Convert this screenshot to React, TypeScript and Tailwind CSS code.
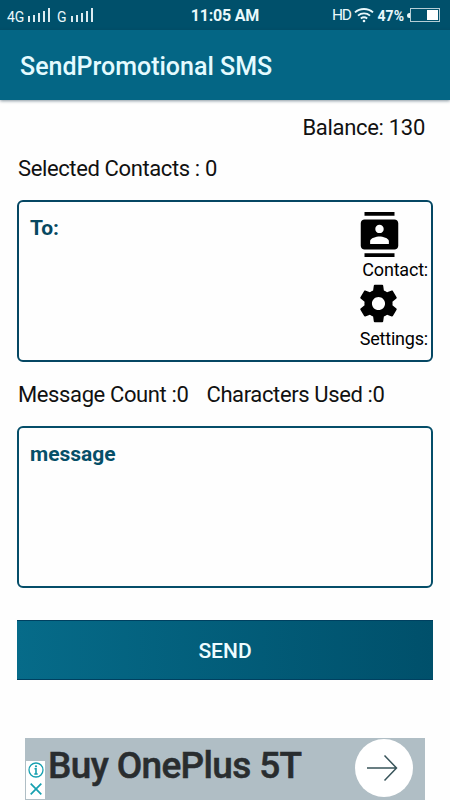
import { MdContacts } from 'react-icons/md';

const signalBars = [6, 7, 9, 11, 14];

const Signal = () => (
  <div className="flex h-[14px] items-end gap-[3px]">
    {signalBars.map((height) => (
      <span key={height} className="w-[2px] bg-[#dcebf0]" style={{ height }} />
    ))}
  </div>
);

const GearIcon = () => (
  <svg className="mt-[-1px] mr-[27px] mb-px h-[45px] w-[45px]" viewBox="0 0 24 24" fill="currentColor">
    <path d="M19.43 12.98c.04-.32.07-.64.07-.98s-.03-.66-.07-.98l2.11-1.65c.19-.15.24-.42.12-.64l-2-3.46c-.12-.22-.39-.3-.61-.22l-2.49 1c-.52-.4-1.08-.73-1.69-.98l-.38-2.65C14.46 2.18 14.25 2 14 2h-4c-.25 0-.46.18-.49.42l-.38 2.65c-.61.25-1.17.59-1.69.98l-2.49-1c-.23-.09-.49 0-.61.22l-2 3.46c-.13.22-.07.49.12.64l2.11 1.65c-.04.32-.07.65-.07.98s.03.66.07.98l-2.11 1.65c-.19.15-.24.42-.12.64l2 3.46c.12.22.39.3.61.22l2.49-1c.52.4 1.08.73 1.69.98l.38 2.65c.03.24.24.42.49.42h4c.25 0 .46-.18.49-.42l.38-2.65c.61-.25 1.17-.59 1.69-.98l2.49 1c.23.09.49 0 .61-.22l2-3.46c.12-.22.07-.49-.12-.64l-2.11-1.65zM12 15.5c-1.93 0-3.5-1.57-3.5-3.5s1.57-3.5 3.5-3.5 3.5 1.57 3.5 3.5-1.57 3.5-3.5 3.5z" />
  </svg>
);

const StatusBar = () => (
  <div className="grid h-[30px] grid-cols-3 items-center bg-[#00506b] text-[#eaf8fb]">
    <div className="flex items-center pl-[7px] text-[14px] leading-none">
      <span className="mt-[3px] w-[21px]">4G</span>
      <Signal />
      <span className="mt-[3px] ml-[7px] w-[14px]">G</span>
      <Signal />
    </div>
    <span className="pt-[2px] text-center text-[16px] leading-none font-bold tracking-[-0.2px]">11:05 AM</span>
    <div className="flex items-center justify-end pr-[10px] leading-none">
      <span className="mt-px text-[15.500px] tracking-[-1.3px]">HD</span>
      <svg className="ml-[3px] h-[16px] w-[20px]" viewBox="0 0 20 16" fill="none" stroke="currentColor" strokeWidth="1.9">
        <path d="M1 5.4C6 .8 14 .8 19 5.4M4 8.6c3.5-3 8.5-3 12 0M6.8 11.5c2-1.5 4.4-1.5 6.4 0" />
        <circle cx="10" cy="14" r="1.3" fill="currentColor" stroke="none" />
      </svg>
      <span className="mt-[2px] ml-[4px] text-[14px] font-bold">47%</span>
      <span className="ml-[3px] h-[5px] w-[3px] rounded-l-full bg-[#eaf8fb]" />
      <div className="flex h-[14px] w-[30px] justify-end border border-[#b5cdd5] p-px">
        <span className="w-[11px] bg-white" />
      </div>
    </div>
  </div>
);

const AdBanner = () => (
  <div className="mx-[25px] mt-[58px] flex h-[62px] bg-[#b0bec5]">
    <div className="mt-[23px] ml-px flex h-[38px] w-[19px] flex-col items-center bg-white pt-px text-[#16a0b0]">
      <svg className="h-[16px] w-[16px] shrink-0" viewBox="0 0 16 16" fill="none" stroke="currentColor" strokeWidth="1.3">
        <circle cx="8" cy="8" r="7" />
        <path d="M6.5 6.8H8v5M6.3 12h3.4" strokeWidth="1.6" />
        <circle cx="8" cy="4.3" r="1.1" fill="currentColor" stroke="none" />
      </svg>
      <svg className="mt-[5px] h-[12px] w-[12px] shrink-0" viewBox="0 0 12 12" fill="none" stroke="currentColor" strokeWidth="1.7">
        <path d="M.7 .7l10.600 10.600M11.300 .7L.7 11.300" />
      </svg>
    </div>
    <p className="mt-[7px] ml-[3px] w-[307px] text-[37px] leading-[42px] font-medium tracking-[-0.65px] whitespace-nowrap text-[#292d2f] [-webkit-text-stroke:0.5px_#292d2f]">
      Buy OnePlus 5T
    </p>
    <div className="mt-px flex h-[58px] w-[58px] shrink-0 items-center justify-center rounded-full bg-white">
      <svg className="ml-[-4px] h-[28px] w-[32px]" viewBox="0 0 32 28" fill="none" stroke="#38545a" strokeWidth="1.5">
        <path d="M1 14h29M18.500 1.500L30.500 14l-12 12.500" />
      </svg>
    </div>
  </div>
);

const App = () => (
  <div className="h-[800px] w-[450px] overflow-hidden bg-[#fefefe] font-['Roboto','Noto_Sans',sans-serif] text-[#111111]">
    <StatusBar />
    <header className="flex h-[70px] items-center bg-[#046685] pl-[20px] shadow-[0_1px_3px_rgba(20,50,70,0.5)]">
      <h1 className="pt-[3px] text-[25px] leading-none font-medium text-[#e4fbff]">SendPromotional SMS</h1>
    </header>

    <main className="px-[18px] text-[22px] leading-[26px] tracking-[-0.38px]">
      <p className="mt-[15px] pr-[7px] text-right tracking-[-0.3px]">Balance: 130</p>
      <p className="mt-[15px]">Selected Contacts : 0</p>

      <div className="mt-[18px] -ml-px flex h-[162px] w-[416px] justify-between rounded-[6px] border-2 border-[#054763]">
        <span className="pt-[13px] pl-[11px] text-[21px] font-bold tracking-normal text-[#064861]">To:</span>
        <div className="flex flex-col items-end pt-[10px] pr-[3px] text-[18px] leading-[24px] tracking-[-0.2px] text-black">
          <MdContacts className="mr-[26px] mb-px h-[45px] w-[45px]" />
          <span>Contact:</span>
          <GearIcon />
          <span>Settings:</span>
        </div>
      </div>

      <p className="mt-[20px] flex gap-[18px] whitespace-nowrap">
        <span>Message Count :0</span>
        <span>Characters Used :0</span>
      </p>

      <div className="mt-[18px] -ml-px h-[162px] w-[416px] rounded-[6px] border-2 border-[#054e69] pt-[13px] pl-[11px] text-[21px] font-bold tracking-normal text-[#064f68]">
        message
      </div>

      <button className="mt-[32px] -ml-px block h-[60px] w-[416px] border-y border-[#004060] bg-linear-to-r from-[#066b89] to-[#00506b] pt-[2px] text-[21px] font-medium tracking-normal text-[#eefcff]">
        SEND
      </button>
    </main>

    <AdBanner />
  </div>
);

export default App;
